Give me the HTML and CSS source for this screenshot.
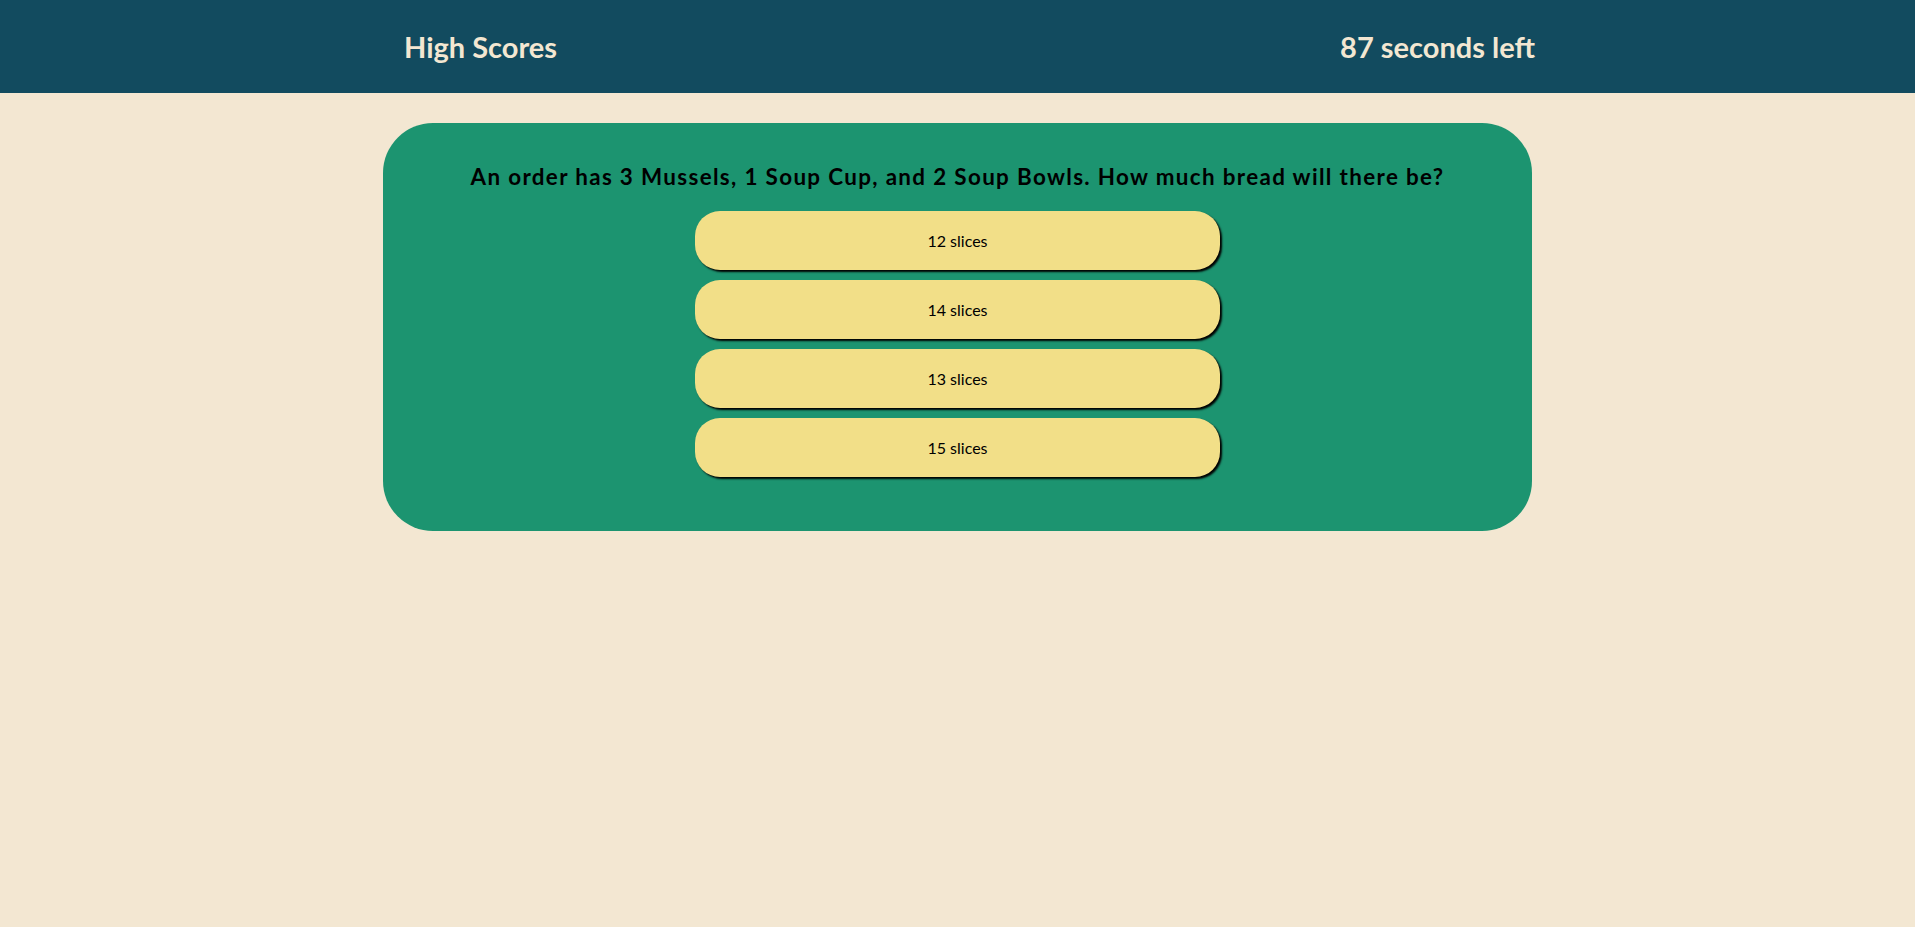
FILE: index.html
```html
<!DOCTYPE html>
<html lang="en">
<head>
<meta charset="utf-8">
<title>Quiz</title>
<link rel="stylesheet" href="styles.css">
</head>
<body>
<header class="topbar">
  <a class="topbar-link" href="#">High Scores</a>
  <span class="timer">87 seconds left</span>
</header>
<main class="main">
  <section class="quiz-card">
    <h2 class="question">An order has 3 Mussels, 1 Soup Cup, and 2 Soup Bowls. How much bread will there be?</h2>
    <div class="answers">
      <button class="answer">12 slices</button>
      <button class="answer">14 slices</button>
      <button class="answer">13 slices</button>
      <button class="answer">15 slices</button>
    </div>
  </section>
</main>
</body>
</html>
```
FILE: styles.css
```css
html, body {
  margin: 0;
  padding: 0;
}
body {
  background: #f3e7d2;
  font-family: "Trebuchet MS", Lato, "Noto Sans", sans-serif;
}
.topbar {
  height: 93px;
  background: #124b5f;
  display: flex;
  align-items: center;
  justify-content: space-between;
  padding: 0 380px 0 404px;
  box-sizing: border-box;
}
.topbar-link, .timer {
  color: #f3e7d2;
  font-weight: 700;
  font-size: 29px;
  text-decoration: none;
  line-height: 34px;
}
.main {
  padding-top: 30px;
}
.quiz-card {
  width: 60%;
  margin: 0 auto;
  background: #1c9470;
  border-radius: 50px;
  padding: 40px 0 44px;
  box-sizing: border-box;
  display: flex;
  flex-direction: column;
  align-items: center;
}
.question {
  margin: 0 0 20px;
  font-size: 22.4px;
  line-height: 28px;
  font-weight: 700;
  letter-spacing: 1.35px;
  color: #000;
  text-align: center;
}
.answers {
  display: flex;
  flex-direction: column;
  align-items: center;
}
.answer {
  width: 525px;
  height: 59px;
  margin: 0 0 10px;
  border: none;
  border-radius: 25px;
  background: #f2df88;
  box-shadow: 2px 2px 2px #000;
  font-family: inherit;
  font-size: 16px;
  color: #000;
  padding: 0;
  cursor: pointer;
}
```
